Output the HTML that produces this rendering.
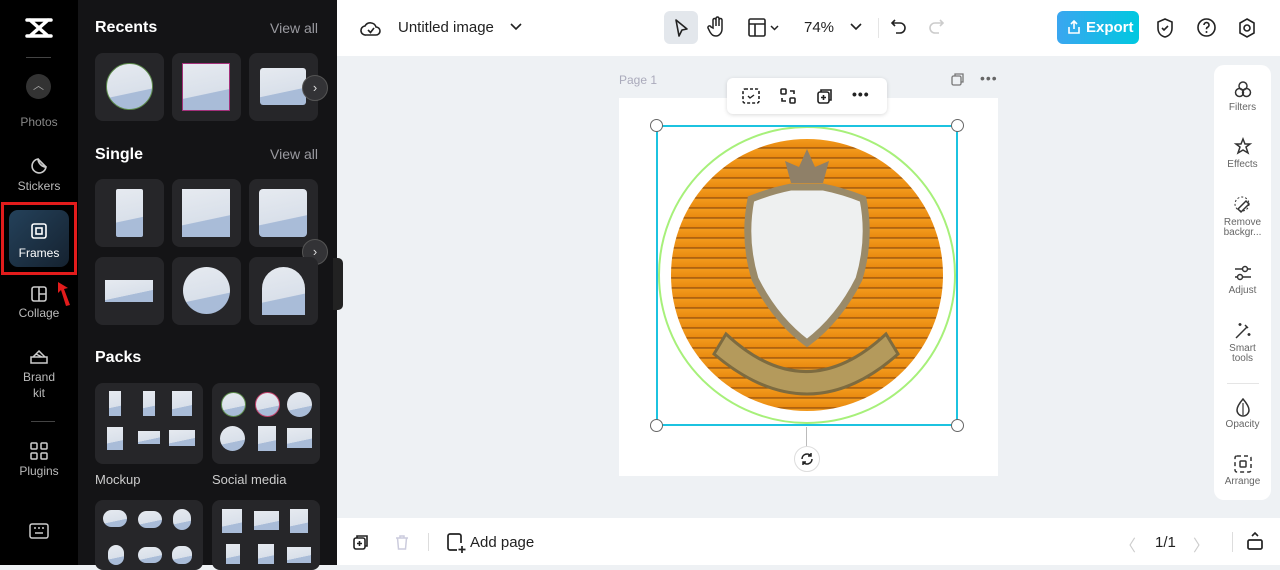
<!DOCTYPE html>
<html><head><meta charset="utf-8"><style>
*{box-sizing:border-box;margin:0;padding:0}
body{width:1280px;height:565px;overflow:hidden;font-family:"Liberation Sans",sans-serif;background:#eef1f4;position:relative}
.abs{position:absolute}
.rail{left:0;top:0;width:78px;height:565px;background:#000}
.panel{left:78px;top:0;width:259px;height:565px;background:#141416}
.ri{position:absolute;left:0;width:78px;text-align:center;color:#bbb;font-size:12px}
.ri svg{display:block;margin:0 auto 3px}
.h{position:absolute;color:#fff;font-weight:bold;font-size:16px}
.va{position:absolute;color:#9a9aa0;font-size:14px}
.card{position:absolute;background:#262629;border-radius:8px}
.ph{position:absolute;background:linear-gradient(168deg,#e6eaf0 0%,#d9e0ea 62%,#a9bcd8 63%,#a9bcd8 100%);}
.nx{position:absolute;width:26px;height:26px;border-radius:50%;background:#333336;border:1px solid #555;color:#ddd;font-size:13px;text-align:center;line-height:23px}
.top{left:337px;top:0;width:943px;height:56px;background:#fff}
.bot{left:337px;top:518px;width:943px;height:47px;background:#fff}
.tb{position:absolute;color:#222;font-size:15px}
.side{left:1214px;top:65px;width:57px;height:435px;background:#fff;border-radius:10px}
.si{position:absolute;left:1214px;width:57px;text-align:center;color:#666;font-size:10px;line-height:10px}
.si svg{display:block;margin:0 auto 3px}
.hdl{position:absolute;width:13px;height:13px;border-radius:50%;background:#fff;border:1px solid #666}
</style></head><body>
<div class="abs rail"></div>
<div class="abs panel"></div>
<svg class="abs" style="left:25px;top:17px" width="28" height="22" viewBox="0 0 28 22"><path d="M2 3h24M2 19h24M5 3l18 16M23 3L5 19" stroke="#fff" stroke-width="3.5" fill="none" stroke-linecap="round"/></svg>
<div class="abs" style="left:26px;top:57px;width:25px;height:1px;background:#444"></div>
<div class="abs" style="left:26px;top:74px;width:25px;height:25px;border-radius:50%;background:#333;color:#aaa;text-align:center;font-size:11px;line-height:25px">︿</div>
<div class="ri" style="top:115px;color:#888">Photos</div>
<div class="ri" style="top:156px"><svg width="20" height="20" viewBox="0 0 20 20"><path d="M17 11A7 7 0 1 1 9 3c0 4 4 8 8 8zM9 3l8 8" stroke="#ccc" stroke-width="1.6" fill="none"/></svg>Stickers</div>
<div class="abs" style="left:1px;top:202px;width:76px;height:73px;border:3px solid #e21c1c"></div>
<div class="abs" style="left:9px;top:210px;width:60px;height:57px;border-radius:9px;background:linear-gradient(135deg,#24415a,#152230)"></div>
<div class="ri" style="top:222px;color:#fff"><svg width="18" height="18" viewBox="0 0 18 18" style="margin-bottom:6px"><rect x="2" y="2" width="14" height="14" rx="2" stroke="#fff" stroke-width="1.6" fill="none"/><rect x="6" y="6" width="6" height="6" stroke="#fff" stroke-width="1.6" fill="none"/></svg>Frames</div>
<svg class="abs" style="left:54px;top:280px" width="20" height="28" viewBox="0 0 20 28"><path d="M4 2l10 6-4 1 6 16-4 1-5-16-3 3z" fill="#e21c1c"/></svg>
<div class="ri" style="top:285px"><svg width="18" height="18" viewBox="0 0 18 18"><rect x="2" y="2" width="14" height="14" rx="2" stroke="#ccc" stroke-width="1.6" fill="none"/><path d="M9 2v14M9 9h7" stroke="#ccc" stroke-width="1.6"/></svg>Collage</div>
<div class="ri" style="top:348px;line-height:16px"><svg width="20" height="18" viewBox="0 0 20 18"><path d="M2 9h16v6H2zM4 9l6-6 6 6M7 6l6 3" stroke="#ccc" stroke-width="1.5" fill="none"/></svg>Brand<br>kit</div>
<div class="abs" style="left:31px;top:421px;width:24px;height:1px;background:#444"></div>
<div class="ri" style="top:441px"><svg width="20" height="20" viewBox="0 0 20 20"><g stroke="#ccc" stroke-width="1.5" fill="none"><rect x="2" y="2" width="6" height="6" rx="1"/><rect x="12" y="2" width="6" height="6" rx="1"/><rect x="2" y="12" width="6" height="6" rx="1"/><rect x="12" y="12" width="6" height="6" rx="1"/></g></svg>Plugins</div>
<svg class="abs" style="left:29px;top:523px" width="20" height="16" viewBox="0 0 20 16"><rect x="1" y="1" width="18" height="14" rx="2" stroke="#ccc" stroke-width="1.5" fill="none"/><path d="M5 5h2M9 5h2M13 5h2M6 10h8" stroke="#ccc" stroke-width="1.5"/></svg>

<div class="h" style="left:95px;top:19px">Recents</div><div class="va" style="left:270px;top:20px">View all</div>
<div class="card" style="left:95px;top:53px;width:69px;height:68px"></div>
<div class="ph" style="left:106px;top:63px;width:47px;height:47px;border-radius:50%;border:1.5px solid #5b8a4a"></div>
<div class="card" style="left:172px;top:53px;width:69px;height:68px"></div>
<div class="ph" style="left:182px;top:63px;width:48px;height:48px;border:1.5px solid #a3307a"></div>
<div class="card" style="left:249px;top:53px;width:69px;height:68px"></div>
<div class="ph" style="left:260px;top:68px;width:46px;height:37px;border-radius:3px"></div>
<div class="nx" style="left:302px;top:75px">›</div>
<div class="h" style="left:95px;top:146px">Single</div><div class="va" style="left:270px;top:146px">View all</div>
<div class="card" style="left:95px;top:179px;width:69px;height:68px"></div><div class="ph" style="left:116px;top:189px;width:27px;height:48px;border-radius:2px"></div>
<div class="card" style="left:172px;top:179px;width:69px;height:68px"></div><div class="ph" style="left:182px;top:189px;width:48px;height:48px"></div>
<div class="card" style="left:249px;top:179px;width:69px;height:68px"></div><div class="ph" style="left:259px;top:189px;width:48px;height:48px;border-radius:4px"></div>
<div class="nx" style="left:302px;top:239px">›</div>
<div class="card" style="left:95px;top:257px;width:69px;height:68px"></div><div class="ph" style="left:105px;top:280px;width:48px;height:22px"></div>
<div class="card" style="left:172px;top:257px;width:69px;height:68px"></div><div class="ph" style="left:183px;top:267px;width:47px;height:47px;border-radius:50%"></div>
<div class="card" style="left:249px;top:257px;width:69px;height:68px"></div><div class="ph" style="left:262px;top:267px;width:43px;height:48px;border-radius:22px 22px 0 0"></div>
<div class="abs" style="left:333px;top:258px;width:10px;height:52px;background:#222;border-radius:0 5px 5px 0"></div>
<div class="h" style="left:95px;top:349px">Packs</div>
<div class="card" style="left:95px;top:383px;width:108px;height:81px"></div>
<div class="ph" style="left:109px;top:391px;width:12px;height:25px"></div><div class="ph" style="left:143px;top:391px;width:12px;height:25px"></div><div class="ph" style="left:172px;top:391px;width:20px;height:25px"></div>
<div class="ph" style="left:107px;top:427px;width:16px;height:23px"></div><div class="ph" style="left:138px;top:431px;width:22px;height:13px"></div><div class="ph" style="left:169px;top:430px;width:26px;height:16px"></div>
<div class="card" style="left:212px;top:383px;width:108px;height:81px"></div>
<div class="ph" style="left:221px;top:392px;width:25px;height:25px;border-radius:50%;border:1.5px solid #5b8a4a"></div><div class="ph" style="left:255px;top:392px;width:25px;height:25px;border-radius:50%;border:1.5px solid #c0406a"></div><div class="ph" style="left:287px;top:392px;width:25px;height:25px;border-radius:50%"></div>
<div class="ph" style="left:220px;top:426px;width:25px;height:25px;border-radius:50%"></div><div class="ph" style="left:258px;top:426px;width:18px;height:25px"></div><div class="ph" style="left:287px;top:428px;width:25px;height:20px"></div>
<div class="abs" style="color:#ccc;font-size:13px;left:95px;top:472px">Mockup</div><div class="abs" style="color:#ccc;font-size:13px;left:212px;top:472px">Social media</div>
<div class="card" style="left:95px;top:500px;width:108px;height:70px"></div>
<div class="ph" style="left:103px;top:510px;width:24px;height:17px;border-radius:9px"></div><div class="ph" style="left:138px;top:511px;width:24px;height:17px;border-radius:9px"></div><div class="ph" style="left:173px;top:509px;width:18px;height:21px;border-radius:9px"></div>
<div class="ph" style="left:108px;top:545px;width:16px;height:20px;border-radius:8px"></div><div class="ph" style="left:138px;top:547px;width:24px;height:16px;border-radius:8px"></div><div class="ph" style="left:172px;top:546px;width:20px;height:18px;border-radius:8px"></div>
<div class="card" style="left:212px;top:500px;width:108px;height:70px"></div>
<div class="ph" style="left:222px;top:509px;width:20px;height:24px"></div><div class="ph" style="left:254px;top:511px;width:25px;height:19px"></div><div class="ph" style="left:290px;top:509px;width:18px;height:24px"></div>
<div class="ph" style="left:226px;top:544px;width:14px;height:20px"></div><div class="ph" style="left:258px;top:544px;width:16px;height:20px"></div><div class="ph" style="left:287px;top:547px;width:24px;height:16px"></div>

<div class="abs top"></div>
<svg class="abs" style="left:360px;top:18px" width="22" height="20" viewBox="0 0 22 20"><path d="M6 17h10a4 4 0 0 0 0-8 6 6 0 0 0-11-1 4.5 4.5 0 0 0 1 9z" stroke="#222" stroke-width="1.6" fill="none"/><path d="M8 12l2.5 2.5L14 10" stroke="#222" stroke-width="1.6" fill="none"/></svg>
<div class="tb" style="left:398px;top:19px">Untitled image</div>
<svg class="abs" style="left:510px;top:23px" width="12" height="8"><path d="M1 1l5 5 5-5" stroke="#222" stroke-width="1.6" fill="none"/></svg>
<div class="abs" style="left:664px;top:11px;width:34px;height:33px;border-radius:6px;background:#e3e7ec"></div>
<svg class="abs" style="left:673px;top:18px" width="16" height="20" viewBox="0 0 16 20"><path d="M3 2l11 9-5 1-3 6z" stroke="#222" stroke-width="1.6" fill="none" stroke-linejoin="round"/></svg>
<svg class="abs" style="left:707px;top:16px" width="20" height="22" viewBox="0 0 20 22"><path d="M6 12V4a1.5 1.5 0 0 1 3 0v6V2.5a1.5 1.5 0 0 1 3 0V10V4a1.5 1.5 0 0 1 3 0v9c0 4-3 7-6 7s-4-1-6-4l-2-4a1.5 1.5 0 0 1 3-1z" stroke="#222" stroke-width="1.5" fill="none"/></svg>
<svg class="abs" style="left:748px;top:18px" width="36" height="20" viewBox="0 0 36 20"><rect x="1" y="1" width="16" height="17" rx="1.5" stroke="#222" stroke-width="1.6" fill="none"/><path d="M1 6h16M7 6v12" stroke="#222" stroke-width="1.6"/><path d="M23 8l3.5 3.5L30 8" stroke="#222" stroke-width="1.5" fill="none"/></svg>
<div class="tb" style="left:804px;top:19px">74%</div>
<svg class="abs" style="left:850px;top:23px" width="12" height="8"><path d="M1 1l5 5 5-5" stroke="#222" stroke-width="1.6" fill="none"/></svg>
<div class="abs" style="left:878px;top:18px;width:1px;height:20px;background:#e5e5e5"></div>
<svg class="abs" style="left:890px;top:17px" width="18" height="20" viewBox="0 0 18 20"><path d="M5 3L2 6l3 3M2 6h8a5 5 0 0 1 0 10H6" stroke="#222" stroke-width="1.6" fill="none"/></svg>
<svg class="abs" style="left:927px;top:17px" width="18" height="20" viewBox="0 0 18 20"><path d="M13 3l3 3-3 3M16 6H8a5 5 0 0 0 0 10h4" stroke="#ccc" stroke-width="1.6" fill="none"/></svg>
<div class="abs" style="left:1057px;top:11px;width:82px;height:33px;border-radius:6px;background:linear-gradient(90deg,#3aa6f0,#00c8e0);color:#fff;font-weight:bold;font-size:15px;line-height:33px;padding-left:29px">Export</div>
<svg class="abs" style="left:1067px;top:19px" width="14" height="16" viewBox="0 0 14 16"><path d="M7 10V2M4 5l3-3 3 3M2 8v6h10V8" stroke="#fff" stroke-width="1.6" fill="none"/></svg>
<svg class="abs" style="left:1155px;top:17px" width="20" height="22" viewBox="0 0 20 22"><path d="M10 2l7 3v6c0 5-3 8-7 9-4-1-7-4-7-9V5z M7 11l2 2 4-4" stroke="#222" stroke-width="1.6" fill="none"/></svg>
<svg class="abs" style="left:1196px;top:17px" width="21" height="21" viewBox="0 0 21 21"><circle cx="10.5" cy="10.5" r="8.5" stroke="#222" stroke-width="1.6" fill="none"/><path d="M8 8a2.5 2.5 0 1 1 3.5 2.3c-1 .4-1 1-1 2" stroke="#222" stroke-width="1.6" fill="none"/><circle cx="10.5" cy="15" r="1" fill="#222"/></svg>
<svg class="abs" style="left:1237px;top:17px" width="20" height="22" viewBox="0 0 20 22"><path d="M10 2l7 4v10l-7 4-7-4V6z" stroke="#222" stroke-width="1.6" fill="none"/><circle cx="10" cy="11" r="3" stroke="#222" stroke-width="1.6" fill="none"/></svg>

<div class="abs" style="left:619px;top:73px;color:#aab;font-size:12px">Page 1</div>
<svg class="abs" style="left:951px;top:72px" width="14" height="14" viewBox="0 0 14 14"><rect x="1" y="4" width="9" height="9" rx="1.5" stroke="#777" stroke-width="1.3" fill="none"/><path d="M4 4V2h8v8h-2" stroke="#777" stroke-width="1.3" fill="none"/></svg>
<div class="abs" style="left:980px;top:70px;color:#666;font-size:14px;letter-spacing:1px">•••</div>
<div class="abs" style="left:619px;top:98px;width:379px;height:378px;background:#fff"></div>
<div class="abs" style="left:727px;top:78px;width:160px;height:36px;background:#fff;border-radius:6px;box-shadow:0 1px 4px rgba(0,0,0,.15)"></div>
<svg class="abs" style="left:741px;top:87px" width="20" height="18" viewBox="0 0 20 18"><rect x="2" y="2" width="16" height="14" rx="2" stroke="#222" stroke-width="1.6" fill="none" stroke-dasharray="3 2"/><path d="M7 9l2 2 4-3" stroke="#222" stroke-width="1.4" fill="none"/></svg>
<svg class="abs" style="left:779px;top:87px" width="18" height="18" viewBox="0 0 18 18"><g stroke="#222" stroke-width="1.6" fill="none"><rect x="2" y="2" width="5" height="5" rx="1"/><rect x="11" y="11" width="5" height="5" rx="1"/><path d="M11 4h4v3M7 14H3v-3"/></g></svg>
<svg class="abs" style="left:816px;top:87px" width="18" height="18" viewBox="0 0 18 18"><g stroke="#222" stroke-width="1.6" fill="none"><rect x="2" y="5" width="11" height="11" rx="2"/><path d="M5 5V3h10v10h-2M7.5 8v5M5 10.5h5"/></g></svg>
<div class="abs" style="left:852px;top:86px;color:#222;font-size:14px;letter-spacing:1px;font-weight:bold">•••</div>
<div class="abs" style="left:658px;top:126px;width:298px;height:298px;border-radius:50%;border:2.5px solid #a7f07a"></div>
<div class="abs" style="left:671px;top:139px;width:272px;height:272px;border-radius:50%;overflow:hidden;background:repeating-linear-gradient(180deg,#f39a1c 0,#e98a10 8px,#7a3a08 9px,#f5a325 10px);">
 <svg width="272" height="272" viewBox="0 0 272 272"><path d="M136 10l8 18 14-6-6 22h-32l-6-22 14 6z" fill="#8f8068"/>
 <path d="M80 60q20-8 40 -12h32q20 4 40 12q8 40 -4 80q-20 40 -52 64q-32 -24 -52 -64q-12 -40 -4 -80z" fill="#eef0f0" stroke="#9a8a68" stroke-width="7"/>
 <path d="M55 195q80 75 160 0l12 20q-90 80 -184 0z" fill="#b49a5c" stroke="#7d6b40" stroke-width="3"/></svg>
</div>
<div class="abs" style="left:656px;top:125px;width:302px;height:301px;border:2px solid #1cc3e0"></div>
<div class="hdl" style="left:650px;top:119px"></div><div class="hdl" style="left:951px;top:119px"></div>
<div class="hdl" style="left:650px;top:419px"></div><div class="hdl" style="left:951px;top:419px"></div>
<div class="abs" style="left:806px;top:427px;width:1px;height:20px;background:#bbb"></div>
<div class="abs" style="left:794px;top:446px;width:26px;height:26px;border-radius:50%;background:#fff;border:1px solid #ddd"></div>
<svg class="abs" style="left:799px;top:451px" width="16" height="16" viewBox="0 0 16 16"><path d="M3 8a5 5 0 0 1 9-3M13 8a5 5 0 0 1-9 3M12 2v3H9M4 14v-3h3" stroke="#222" stroke-width="1.5" fill="none"/></svg>

<div class="abs side"></div>
<div class="si" style="top:80px"><svg width="20" height="20" viewBox="0 0 20 20"><g stroke="#333" stroke-width="1.5" fill="none"><circle cx="10" cy="6" r="4"/><circle cx="6.5" cy="12.5" r="4"/><circle cx="13.5" cy="12.5" r="4"/></g></svg>Filters</div>
<div class="si" style="top:137px"><svg width="20" height="20" viewBox="0 0 20 20"><path d="M10 2l2 5h5l-4 3 2 6-5-3-5 3 2-6-4-3h5z" stroke="#333" stroke-width="1.5" fill="none"/></svg>Effects</div>
<div class="si" style="top:195px"><svg width="20" height="20" viewBox="0 0 20 20"><path d="M8 17L16 9l-3-3-8 8z" stroke="#333" stroke-width="1.5" fill="none"/><circle cx="9" cy="9" r="7" stroke="#333" stroke-width="1" stroke-dasharray="2 2" fill="none"/></svg>Remove<br>backgr...</div>
<div class="si" style="top:263px"><svg width="20" height="20" viewBox="0 0 20 20"><g stroke="#333" stroke-width="1.5" fill="none"><path d="M2 6h16M2 14h16"/><circle cx="12" cy="6" r="2.5" fill="#fff"/><circle cx="7" cy="14" r="2.5" fill="#fff"/></g></svg>Adjust</div>
<div class="si" style="top:321px"><svg width="20" height="20" viewBox="0 0 20 20"><path d="M3 17L14 6M12 4l3 3M7 2v3M5.5 3.5h3M16 12v3M14.5 13.5h3" stroke="#333" stroke-width="1.5" fill="none"/></svg>Smart<br>tools</div>
<div class="abs" style="left:1227px;top:383px;width:32px;height:1px;background:#e5e5e5"></div>
<div class="si" style="top:397px"><svg width="20" height="20" viewBox="0 0 20 20"><path d="M10 2q6 7 6 11a6 6 0 0 1-12 0q0-4 6-11z" stroke="#333" stroke-width="1.5" fill="none"/><path d="M10 6v12" stroke="#333" stroke-width="1.2"/></svg>Opacity</div>
<div class="si" style="top:454px"><svg width="20" height="20" viewBox="0 0 20 20"><rect x="2" y="2" width="16" height="16" rx="2" stroke="#333" stroke-width="1.5" stroke-dasharray="4 3" fill="none"/><rect x="7" y="7" width="6" height="6" rx="1" stroke="#333" stroke-width="1.5" fill="none"/></svg>Arrange</div>

<div class="abs bot"></div>
<svg class="abs" style="left:352px;top:533px" width="18" height="18" viewBox="0 0 18 18"><g stroke="#222" stroke-width="1.6" fill="none"><rect x="2" y="5" width="11" height="11" rx="2"/><path d="M5 5V3h10v10h-2M7.5 8v5M5 10.5h5"/></g></svg>
<svg class="abs" style="left:394px;top:533px" width="16" height="18" viewBox="0 0 16 18"><path d="M2 5h12M6 5V3h4v2M3.5 5l1 11h7l1-11" stroke="#ccd" stroke-width="1.5" fill="none"/></svg>
<div class="abs" style="left:428px;top:533px;width:1px;height:18px;background:#ddd"></div>
<svg class="abs" style="left:446px;top:532px" width="20" height="22" viewBox="0 0 20 22"><path d="M11 18H4a2 2 0 0 1-2-2V4a2 2 0 0 1 2-2h9a2 2 0 0 1 2 2v7M16 14v7M12.5 17.5h7" stroke="#222" stroke-width="1.7" fill="none"/></svg>
<div class="tb" style="left:470px;top:534px">Add page</div>
<div class="abs" style="left:1120px;top:532px;color:#ccc;font-size:16px">〈</div>
<div class="tb" style="left:1155px;top:534px">1/1</div>
<div class="abs" style="left:1193px;top:532px;color:#ccc;font-size:16px">〉</div>
<div class="abs" style="left:1232px;top:532px;width:1px;height:20px;background:#ddd"></div>
<svg class="abs" style="left:1246px;top:531px" width="18" height="20" viewBox="0 0 18 20"><rect x="2" y="9" width="14" height="9" rx="1.5" stroke="#222" stroke-width="1.7" fill="none"/><path d="M6 5l3-3 3 3" stroke="#222" stroke-width="1.6" fill="none"/></svg>
</body></html>
